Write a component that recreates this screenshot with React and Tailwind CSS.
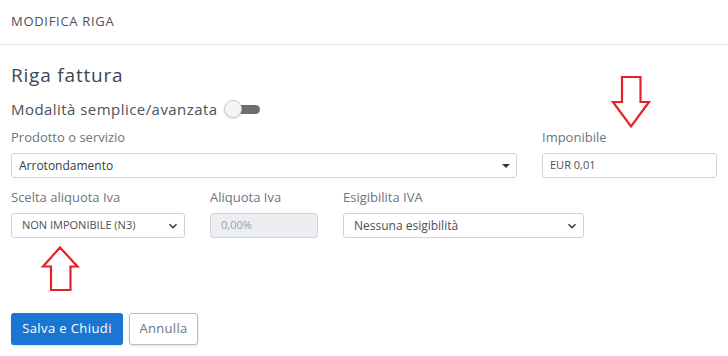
import React, { useState } from 'react'

const Chevron = () => (
    <svg width="10" height="10" viewBox="0 0 10 10" className="shrink-0">
        <path d="M1.5 3.2 L5 6.6 L8.5 3.2" fill="none" stroke="#3f4752" strokeWidth="1.6" />
    </svg>
);

const Field = ({ label, className, children }) => (
    <div className={className}>
        <label className="block text-[13px] text-[#6c757d] leading-none mb-[9px]">{label}</label>
        {children}
    </div>
);

const App = () => {
    const [advanced, setAdvanced] = useState(false);

    return (
        <div className="relative w-[728px] h-[356px] bg-white overflow-hidden text-[#3f4750]" style={{ fontFamily: '"Open Sans", sans-serif' }}>
            {/* header */}
            <div className="h-[45px] border-b border-[#e5e7ea] px-[11px] flex items-center">
                <span className="text-[13px] text-[#4a525b] tracking-[0.7px]">MODIFICA RIGA</span>
            </div>

            <div className="px-[11px] pt-[21px]">
                <h2 className="text-[19px] leading-none text-[#3d4752] tracking-[0.8px] mb-[14px]">Riga fattura</h2>

                <div className="flex items-center gap-[6px] mb-[12px]">
                    <span className="text-[15px] leading-none text-[#4a525b] tracking-[0.45px]">Modalità semplice/avanzata</span>
                    <button onClick={() => setAdvanced(!advanced)} className="relative w-[40px] h-[20px] flex items-center">
                        <span className="absolute left-[4px] right-[4px] h-[9px] rounded-full bg-[#6e6e6e]" />
                        <span className={`absolute top-[1px] w-[18px] h-[18px] rounded-full bg-[#f4f5f7] border border-[#c9ccd1] shadow ${advanced ? 'left-[21px]' : 'left-[0px]'}`} />
                    </button>
                </div>

                <div className="flex gap-[25px] mb-[13px]">
                    <Field label="Prodotto o servizio" className="w-[506px]">
                        <div className="h-[25px] border border-[#ced4da] rounded-[3px] flex items-center justify-between pl-[7px] pr-[6px]">
                            <span className="text-[12px] text-[#343a40]">Arrotondamento</span>
                            <span className="w-0 h-0 border-l-[4px] border-r-[4px] border-t-[4px] border-l-transparent border-r-transparent border-t-[#333]" />
                        </div>
                    </Field>
                    <Field label="Imponibile" className="w-[175px]">
                        <div className="h-[25px] border border-[#ced4da] rounded-[3px] flex items-center px-[7px]">
                            <span className="text-[11px] text-[#495057]">EUR 0,01</span>
                        </div>
                    </Field>
                </div>

                <div className="flex gap-[25px]">
                    <Field label="Scelta aliquota Iva" className="w-[174px]">
                        <div className="h-[25px] border border-[#ced4da] rounded-[3px] flex items-center justify-between pl-[10px] pr-[6px]">
                            <span className="text-[11px] text-[#495057]">NON IMPONIBILE (N3)</span>
                            <Chevron />
                        </div>
                    </Field>
                    <Field label="Aliquota Iva" className="w-[108px]">
                        <div className="h-[25px] border border-[#ced4da] rounded-[3px] bg-[#eceef1] flex items-center px-[10px]">
                            <span className="text-[11px] text-[#9aa0a6]">0,00%</span>
                        </div>
                    </Field>
                    <Field label="Esigibilita IVA" className="w-[241px]">
                        <div className="h-[25px] border border-[#ced4da] rounded-[3px] flex items-center justify-between pl-[10px] pr-[6px]">
                            <span className="text-[12px] text-[#495057]">Nessuna esigibilità</span>
                            <Chevron />
                        </div>
                    </Field>
                </div>

                <div className="flex gap-[6px] mt-[75px]">
                    <button className="h-[32px] w-[112px] rounded-[3px] bg-[#1976d2] text-white text-[13px] font-medium tracking-[0.4px] shadow-sm">Salva e Chiudi</button>
                    <button className="h-[32px] w-[69px] rounded-[3px] border border-[#b8bdc3] bg-white text-[#6c757d] text-[13px] tracking-[0.3px] shadow-sm">Annulla</button>
                </div>
            </div>

            {/* red annotation arrows */}
            <svg className="absolute left-0 top-0 pointer-events-none" width="728" height="356">
                <polygon points="622,77 640.5,77 640.5,102 649,102 631,126.5 613,102 622,102" fill="none" stroke="#e8202a" strokeWidth="2.2" />
                <polygon points="60,247.5 77.5,266.5 70.5,266.5 70.5,290 51,290 51,266.5 43,266.5" fill="none" stroke="#e8202a" strokeWidth="2.2" />
            </svg>
        </div>
    );
};

export default App
